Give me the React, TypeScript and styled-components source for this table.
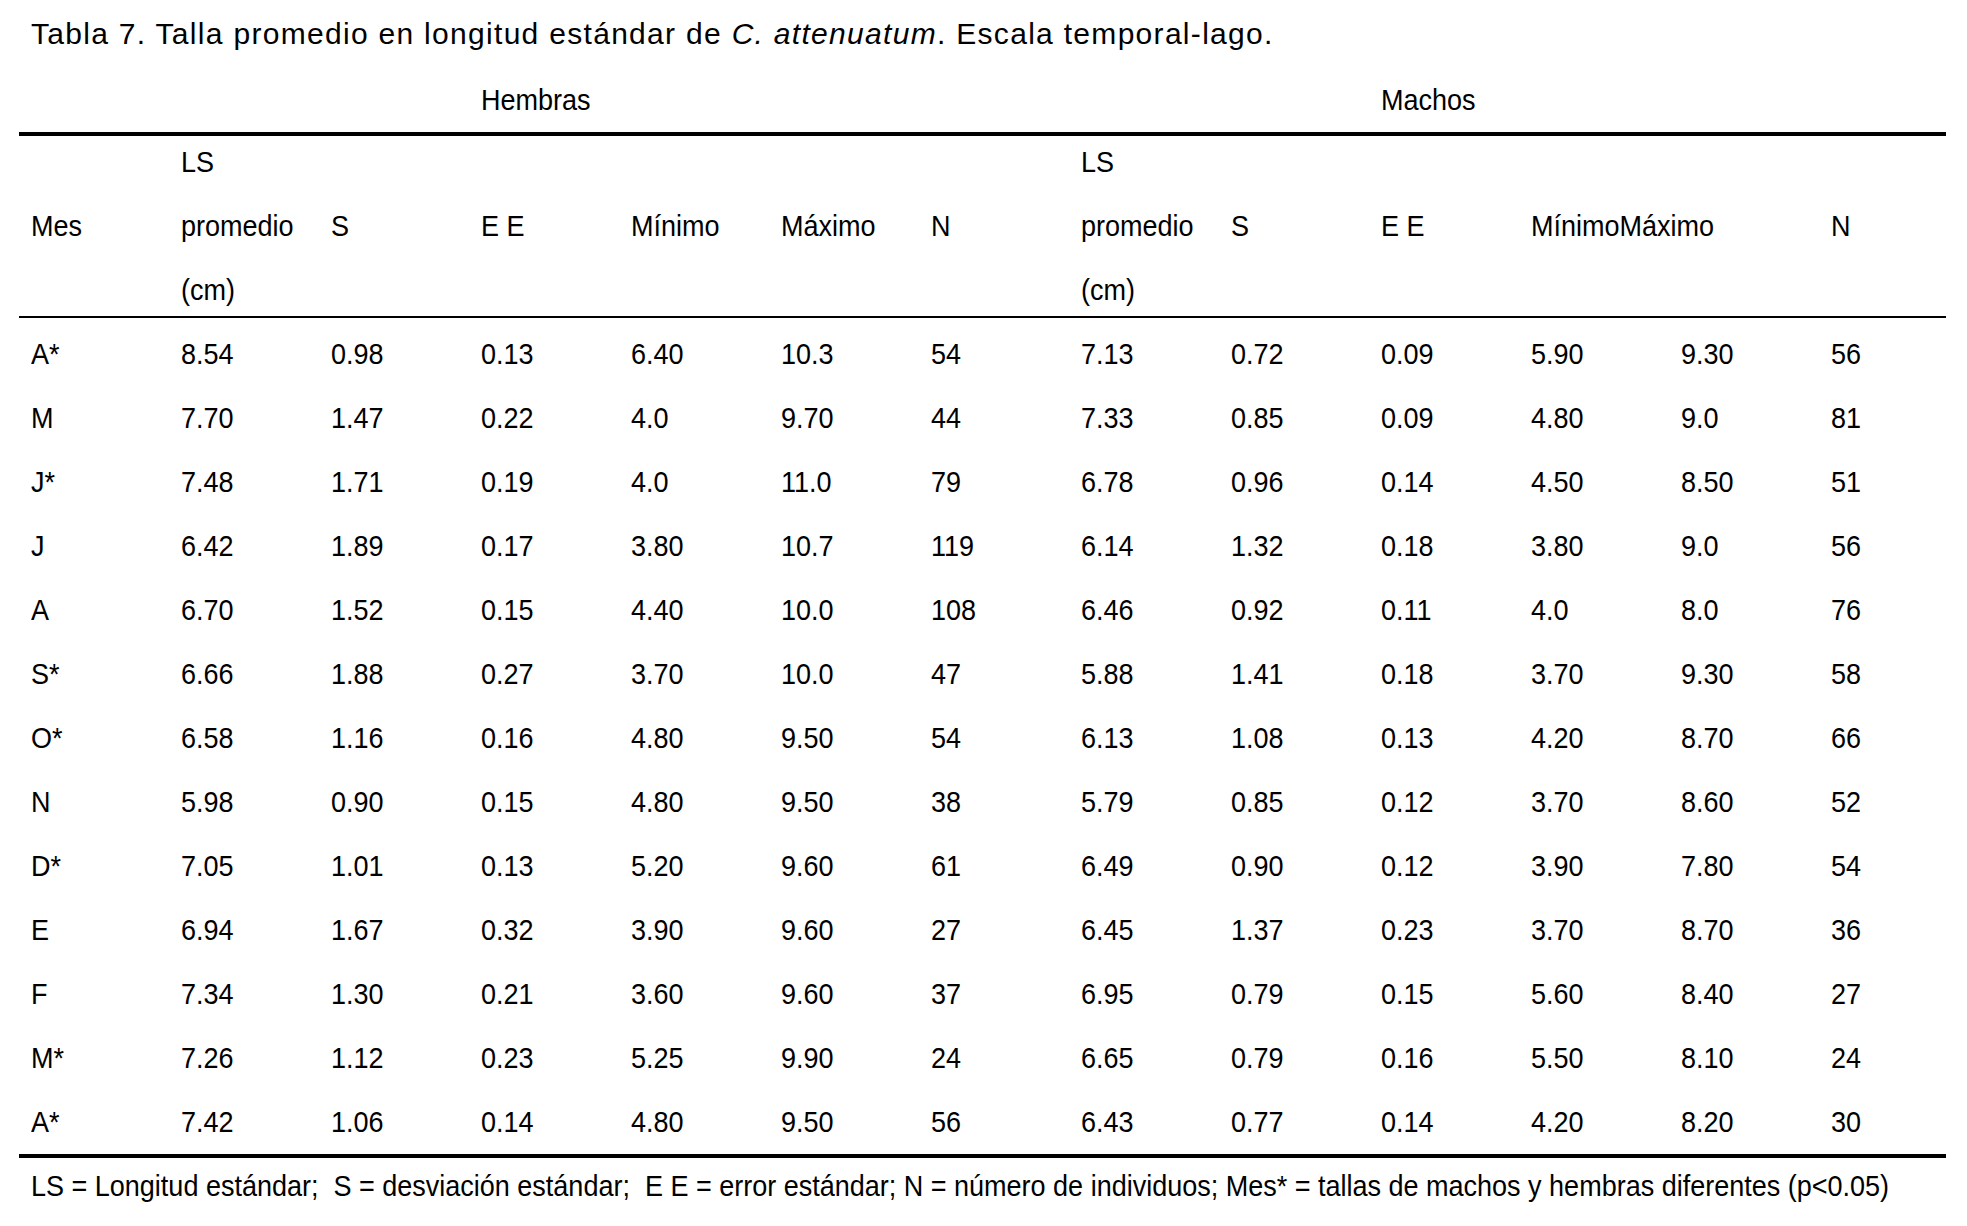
import React from "react";
import styled, { createGlobalStyle } from "styled-components";

const GlobalStyle = createGlobalStyle`
  html, body {
    margin: 0;
    padding: 0;
    background: #fff;
    overflow: hidden;
  }
  body {
    color: #000;
    font-family: "Liberation Sans", Arial, sans-serif;
  }
`;

const Page = styled.div`
  padding: 17px 21px 0 19px;
`;

const Caption = styled.div`
  font-size: 30px;
  line-height: 34px;
  letter-spacing: 1.3px;
  padding-left: 12px;
  margin-bottom: 17px;
  white-space: nowrap;
`;

// the print font is a light condensed face; squeeze the text horizontally
const Squeeze = styled.span<{ $pre?: boolean }>`
  display: inline-block;
  transform: scaleX(0.9);
  transform-origin: left center;
  white-space: ${(p) => (p.$pre ? "pre" : "nowrap")};
`;

const Table = styled.table`
  width: 1927px;
  table-layout: fixed;
  border-collapse: collapse;
  font-size: 30px;
`;

const Col = styled.col<{ $w: number }>`
  width: ${(p) => p.$w}px;
`;

const GroupTh = styled.th`
  height: 64px;
  line-height: 64px;
  padding: 0 0 0 12px;
  text-align: left;
  font-weight: normal;
  vertical-align: top;
  white-space: nowrap;
  border-bottom: 4px solid #000;
`;

const HeadTh = styled.th`
  padding: 0 0 0 12px;
  text-align: left;
  font-weight: normal;
  border-bottom: 2px solid #000;
  white-space: nowrap;
  overflow: visible;
`;

const HeadBox = styled.div`
  height: 180px;
  display: flex;
  flex-direction: column;
  justify-content: center;
  line-height: 64px;
`;

const Td = styled.td<{ $first?: boolean; $last?: boolean }>`
  height: 64px;
  line-height: 64px;
  padding: ${(p) => (p.$first ? "4px" : "0")} 0 0 12px;
  text-align: left;
  white-space: nowrap;
  border-bottom: ${(p) => (p.$last ? "4px solid #000" : "none")};
`;

const Note = styled.div`
  font-size: 30px;
  line-height: 40px;
  padding: 8px 0 0 12px;
  overflow: hidden;
`;

const headers: React.ReactNode[] = [
  "Mes",
  <>LS<br />promedio<br />(cm)</>,
  "S",
  "E E",
  "Mínimo",
  "Máximo",
  "N",
  <>LS<br />promedio<br />(cm)</>,
  "S",
  "E E",
  "MínimoMáximo",
  "",
  "N",
];

const rows: string[][] = [
  ["A*", "8.54", "0.98", "0.13", "6.40", "10.3", "54", "7.13", "0.72", "0.09", "5.90", "9.30", "56"],
  ["M", "7.70", "1.47", "0.22", "4.0", "9.70", "44", "7.33", "0.85", "0.09", "4.80", "9.0", "81"],
  ["J*", "7.48", "1.71", "0.19", "4.0", "11.0", "79", "6.78", "0.96", "0.14", "4.50", "8.50", "51"],
  ["J", "6.42", "1.89", "0.17", "3.80", "10.7", "119", "6.14", "1.32", "0.18", "3.80", "9.0", "56"],
  ["A", "6.70", "1.52", "0.15", "4.40", "10.0", "108", "6.46", "0.92", "0.11", "4.0", "8.0", "76"],
  ["S*", "6.66", "1.88", "0.27", "3.70", "10.0", "47", "5.88", "1.41", "0.18", "3.70", "9.30", "58"],
  ["O*", "6.58", "1.16", "0.16", "4.80", "9.50", "54", "6.13", "1.08", "0.13", "4.20", "8.70", "66"],
  ["N", "5.98", "0.90", "0.15", "4.80", "9.50", "38", "5.79", "0.85", "0.12", "3.70", "8.60", "52"],
  ["D*", "7.05", "1.01", "0.13", "5.20", "9.60", "61", "6.49", "0.90", "0.12", "3.90", "7.80", "54"],
  ["E", "6.94", "1.67", "0.32", "3.90", "9.60", "27", "6.45", "1.37", "0.23", "3.70", "8.70", "36"],
  ["F", "7.34", "1.30", "0.21", "3.60", "9.60", "37", "6.95", "0.79", "0.15", "5.60", "8.40", "27"],
  ["M*", "7.26", "1.12", "0.23", "5.25", "9.90", "24", "6.65", "0.79", "0.16", "5.50", "8.10", "24"],
  ["A*", "7.42", "1.06", "0.14", "4.80", "9.50", "56", "6.43", "0.77", "0.14", "4.20", "8.20", "30"],
];

const widths = [150, 150, 150, 150, 150, 150, 150, 150, 150, 150, 150, 150, 127];

export default function App() {
  return (
    <Page>
      <GlobalStyle />
      <Caption>
        Tabla 7. Talla promedio en longitud estándar de <i>C. attenuatum</i>. Escala temporal-lago.
      </Caption>
      <Table>
        <colgroup>
          {widths.map((w, i) => (
            <Col key={i} $w={w} />
          ))}
        </colgroup>
        <thead>
          <tr>
            <GroupTh colSpan={3} />
            <GroupTh colSpan={4}>
              <Squeeze>Hembras</Squeeze>
            </GroupTh>
            <GroupTh colSpan={2} />
            <GroupTh colSpan={4}>
              <Squeeze>Machos</Squeeze>
            </GroupTh>
          </tr>
          <tr>
            {headers.map((h, i) => (
              <HeadTh key={i}>
                <HeadBox>
                  <Squeeze>{h}</Squeeze>
                </HeadBox>
              </HeadTh>
            ))}
          </tr>
        </thead>
        <tbody>
          {rows.map((r, ri) => (
            <tr key={ri}>
              {r.map((c, ci) => (
                <Td key={ci} $first={ri === 0} $last={ri === rows.length - 1}>
                  <Squeeze>{c}</Squeeze>
                </Td>
              ))}
            </tr>
          ))}
        </tbody>
      </Table>
      <Note>
        <Squeeze $pre>
          {"LS = Longitud estándar;  S = desviación estándar;  E E = error estándar; N = número de individuos; Mes* = tallas de machos y hembras diferentes (p<0.05)"}
        </Squeeze>
      </Note>
    </Page>
  );
}
